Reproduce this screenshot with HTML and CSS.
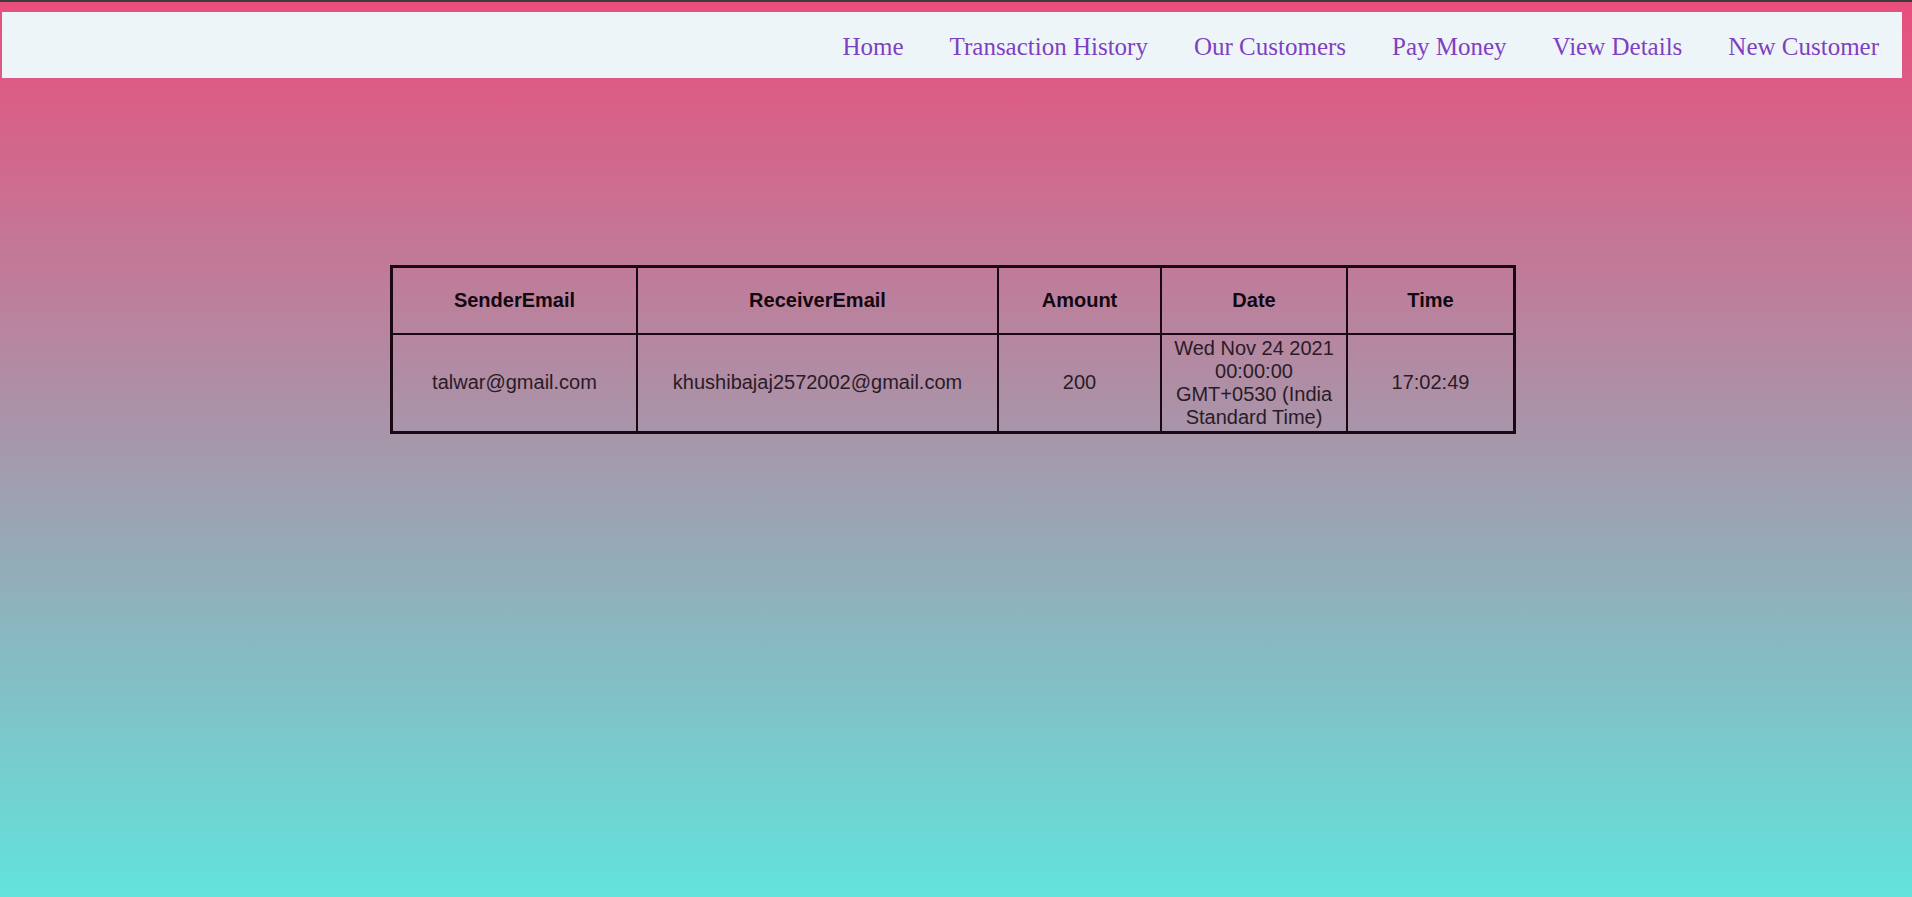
FILE: index.html
```html
<html>
<head>
    <meta charset="UTF-8">
    <meta name="viewport" content="width=device-width, initial-scale=1.0">
    <title>Transaction History</title>
    <link rel="stylesheet" href="styles.css">
</head>
<body>
<div class="header">
    <ul class="nav">
        <li><a href="#">Home</a></li>
        <li><a href="#">Transaction History</a></li>
        <li><a href="#">Our Customers</a></li>
        <li><a href="#">Pay Money</a></li>
        <li><a href="#">View Details</a></li>
        <li><a href="#">New Customer</a></li>
    </ul>
</div>
<div class="content">
    <table class="history">
        <tr>
            <th class="c1">SenderEmail</th>
            <th class="c2">ReceiverEmail</th>
            <th class="c3">Amount</th>
            <th class="c4">Date</th>
            <th class="c5">Time</th>
        </tr>
        <tr>
            <td>talwar@gmail.com</td>
            <td>khushibajaj2572002@gmail.com</td>
            <td>200</td>
            <td>Wed Nov 24 2021 00:00:00 GMT+0530 (India Standard Time)</td>
            <td>17:02:49</td>
        </tr>
    </table>
</div>
</body>
</html>
```

FILE: styles.css
```css
*{
    padding: 0;
    margin: 0;
}
html{
    height: 100%;
}
body{
    min-height: 100%;
    border-top: 2px solid #3c3c3c;
    box-sizing: border-box;
    background: linear-gradient(to bottom, #e94e7c, #62e3dc);
    font-family: "Liberation Sans", Arial, sans-serif;
}
/*顶部导航*/
.header{
    padding: 10px 10px 0 2px;
}
.nav{
    display: flex;
    justify-content: flex-end;
    align-items: center;
    height: 62px;
    padding: 4px 23px 0 0;
    background-color: #eef5f8;
    list-style: none;
}
.nav li{
    margin-left: 46px;
}
.nav a{
    font-family: "Liberation Serif", "DejaVu Serif", serif;
    font-size: 25px;
    color: #7f3fc3;
    text-decoration: none;
}
/*表格*/
.content{
    padding-top: 187px;
}
.history{
    margin-left: 390px;
    width: 1122px;
    border-collapse: collapse;
    border: 3px solid #1a0912;
    table-layout: fixed;
}
.history th,
.history td{
    border: 2px solid #1a0912;
    text-align: center;
    font-size: 20px;
    line-height: 23px;
    padding: 2px 4px;
}
.history th{
    height: 67px;
    color: #120810;
}
.history td{
    color: #2a1b26;
}
/*每一列的宽度*/
.c1{ width: 235px; }
.c2{ width: 351px; }
.c3{ width: 153px; }
.c4{ width: 176px; }
.c5{ width: 157px; }
```
